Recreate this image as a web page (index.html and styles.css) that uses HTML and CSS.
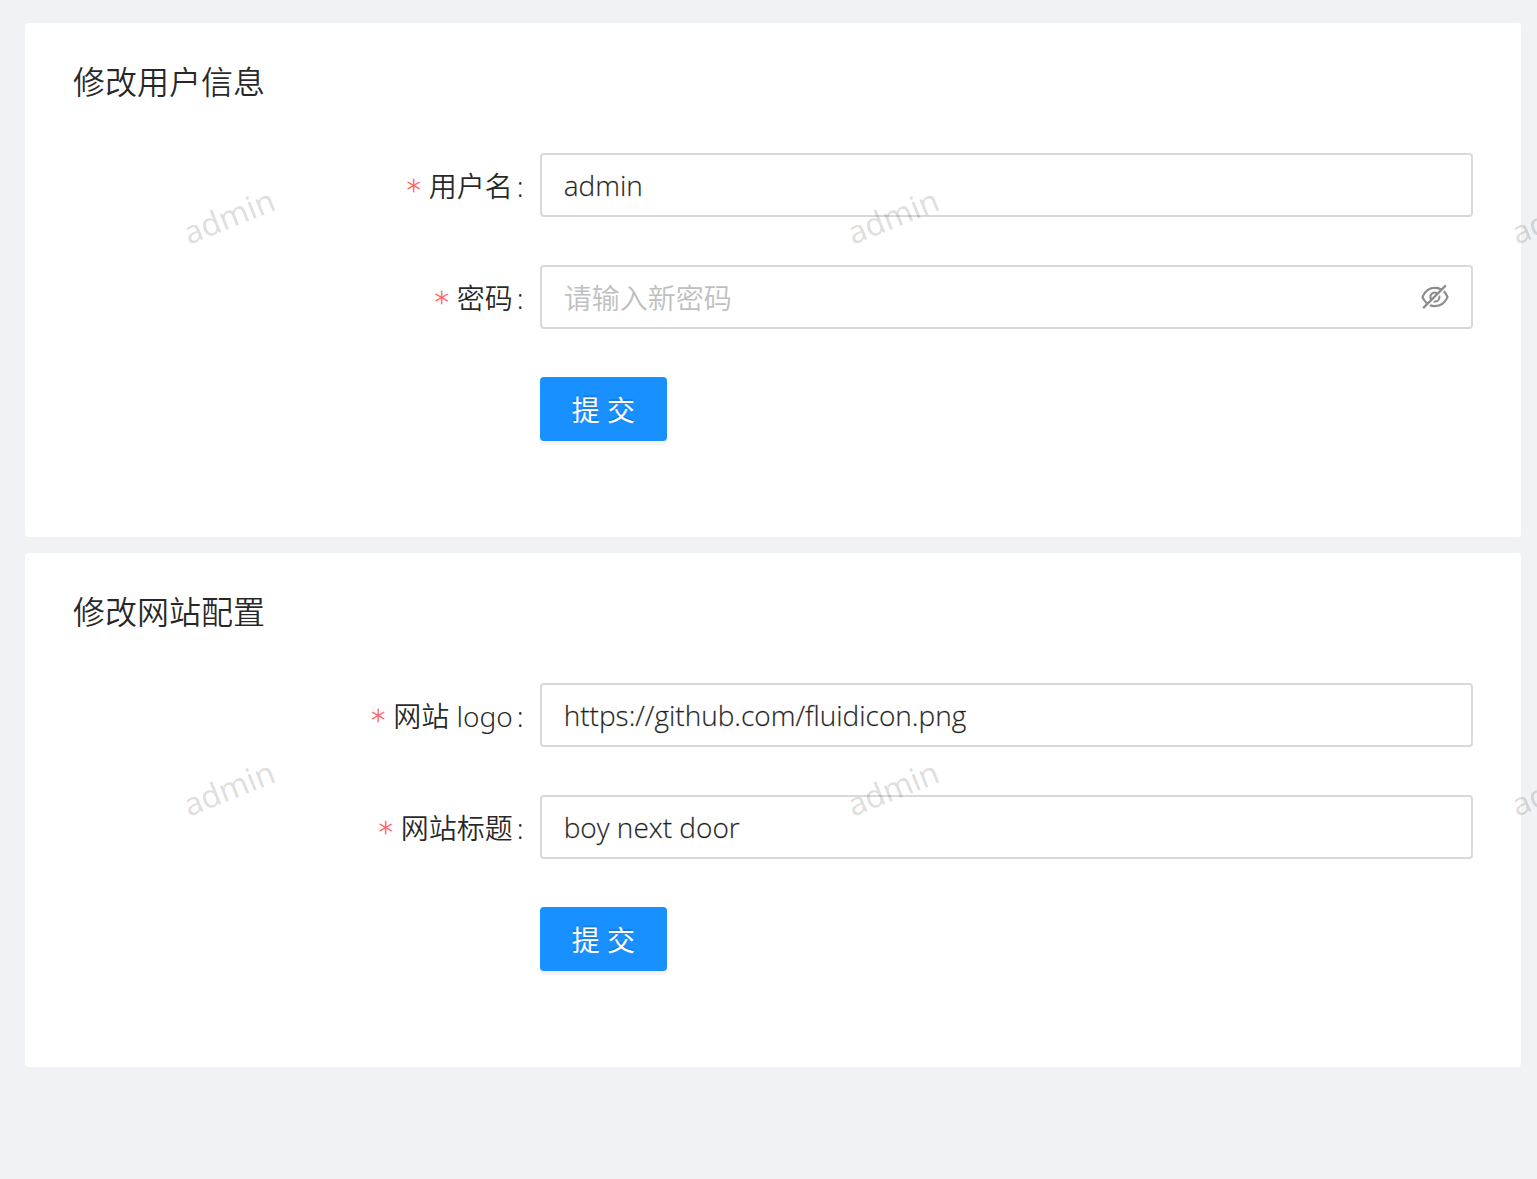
FILE: index.html
```html
<!DOCTYPE html>
<html lang="zh-CN">
<head>
  <meta charset="utf-8">
  <meta name="viewport" content="width=device-width, initial-scale=1">
  <title>网站设置</title>
  <link rel="stylesheet" href="styles.css">
</head>
<body>
  <main class="page">
    <section class="card">
      <h2 class="card-title">修改用户信息</h2>
      <form class="form">
        <div class="row">
          <label class="label" for="username"><span class="required">*</span>用户名<span class="colon">:</span></label>
          <div class="control"><input class="input" id="username" type="text" value="admin"></div>
        </div>
        <div class="row">
          <label class="label" for="password"><span class="required">*</span>密码<span class="colon">:</span></label>
          <div class="control">
            <div class="input password-box">
              <input class="password-input" id="password" type="password" placeholder="请输入新密码">
              <button class="toggle" type="button" aria-label="显示密码">
                <svg class="toggle-icon" viewBox="64 64 896 896" fill="currentColor" aria-hidden="true">
                  <path d="M942.2 486.2Q889.47 375.11 816.7 305l-50.88 50.88C807.31 395.53 843.45 447.4 874.7 512 791.5 684.2 673.4 766 512 766q-72.67 0-133.87-22.38L323 798.75Q408 838 512 838q288.3 0 430.2-300.3a60.29 60.29 0 000-51.5zm-63.57-320.64L836 122.88a8 8 0 00-11.32 0L715.31 232.2Q624.86 186 512 186q-288.3 0-430.2 300.3a60.3 60.3 0 000 51.5q56.69 119.4 136.5 191.41L112.48 835a8 8 0 000 11.31L155.17 889a8 8 0 0011.31 0l712.15-712.12a8 8 0 000-11.32zM149.3 512C232.6 339.8 350.7 258 512 258c54.54 0 104.13 9.36 149.12 28.39l-70.3 70.3a176 176 0 00-238.13 238.13l-83.42 83.42C223.1 637.49 183.3 582.28 149.3 512zm246.7 0a112.11 112.11 0 01146.2-106.69L401.31 546.2A112 112 0 01396 512z"/>
                  <path d="M508 624c-3.46 0-6.87-.16-10.25-.47l-52.82 52.82a176.09 176.09 0 00227.42-227.42l-52.82 52.82c.31 3.38.47 6.79.47 10.25a111.94 111.94 0 01-112 112z"/>
                </svg>
              </button>
            </div>
          </div>
        </div>
        <div class="row actions">
          <button class="submit" type="submit">提 交</button>
        </div>
      </form>
    </section>

    <section class="card">
      <h2 class="card-title">修改网站配置</h2>
      <form class="form">
        <div class="row">
          <label class="label" for="site-logo"><span class="required">*</span>网站 logo<span class="colon">:</span></label>
          <div class="control"><input class="input" id="site-logo" type="text" value="https://github.com/fluidicon.png"></div>
        </div>
        <div class="row">
          <label class="label" for="site-title"><span class="required">*</span>网站标题<span class="colon">:</span></label>
          <div class="control"><input class="input" id="site-title" type="text" value="boy next door"></div>
        </div>
        <div class="row actions">
          <button class="submit" type="submit">提 交</button>
        </div>
      </form>
    </section>

    <div class="watermark" aria-hidden="true">
      <span class="mark">admin</span><span class="mark">admin</span><span class="mark">admin</span>
      <span class="mark">admin</span><span class="mark">admin</span><span class="mark">admin</span>
    </div>
  </main>
</body>
</html>
```

FILE: styles.css
```css
* {
  box-sizing: border-box;
}

body {
  margin: 0;
  background: #f0f2f5;
  color: rgba(0, 0, 0, 0.85);
  font-family: "Noto Sans", "Noto Sans CJK SC", sans-serif;
  font-size: 28px;
  font-weight: 350;
  line-height: 44px;
}

.page {
  position: relative;
  display: flex;
  flex-direction: column;
  gap: 16px;
  min-height: 100vh;
  padding: 23px 16px 24px 25px;
}

.card {
  padding: 34px 48px 48px;
  background: #fff;
  border-radius: 4px;
}

.card-title {
  margin: 0 0 46px;
  font-size: 32px;
  font-weight: 350;
  line-height: 50px;
}

.row {
  display: flex;
  margin-bottom: 48px;
}

.label {
  display: flex;
  flex: 0 0 33.3333%;
  align-items: center;
  justify-content: flex-end;
  height: 64px;
  padding-top: 2px;
  white-space: pre;
}

.required {
  width: 14px;
  margin-right: 8px;
  padding-top: 10px;
  color: #ff4d4f;
  font-family: "DejaVu Sans", sans-serif;
  font-weight: 200;
  -webkit-text-stroke: 1px #ff4d4f80;
}

.colon {
  margin: 0 16px 0 4px;
}

.control {
  flex: 1;
  min-width: 0;
}

.input {
  display: block;
  width: 100%;
  height: 64px;
  padding: 8px 22px;
  background: #fff;
  border: 2px solid #d9d9d9;
  border-radius: 4px;
  color: inherit;
  font: inherit;
  font-family: "Open Sans", "Noto Sans CJK SC", sans-serif;
  -webkit-text-stroke: 1px rgba(0, 0, 0, 0.2);
}

.password-box {
  display: flex;
  align-items: center;
  gap: 8px;
  -webkit-text-stroke: 0;
}

.password-input {
  flex: 1;
  min-width: 0;
  height: 44px;
  padding: 2px 0 0;
  background: none;
  border: 0;
  color: inherit;
  font: inherit;
}

.password-input::placeholder {
  color: #bfbfbf;
}

.toggle {
  display: flex;
  padding: 0;
  background: none;
  border: 0;
  color: rgba(0, 0, 0, 0.45);
  cursor: pointer;
}

.toggle-icon {
  width: 28px;
  height: 28px;
}

.actions {
  padding-left: 33.3333%;
}

.submit {
  height: 64px;
  padding: 2px 30px 0;
  background: #1890ff;
  border: 2px solid #1890ff;
  border-radius: 4px;
  box-shadow: 0 4px 0 rgba(0, 0, 0, 0.045);
  color: #fff;
  font: inherit;
  font-weight: 400;
  text-shadow: 0 -2px 0 rgba(0, 0, 0, 0.12);
  cursor: pointer;
}

.watermark {
  position: absolute;
  inset: 0;
  display: grid;
  grid-template-columns: repeat(3, 664px);
  grid-auto-rows: 572px;
  padding: 194px 0 0 181px;
  overflow: hidden;
  pointer-events: none;
}

.mark {
  justify-self: start;
  align-self: start;
  color: rgba(0, 0, 0, 0.15);
  font-size: 32px;
  font-weight: 400;
  transform: rotate(-22deg);
}
```
